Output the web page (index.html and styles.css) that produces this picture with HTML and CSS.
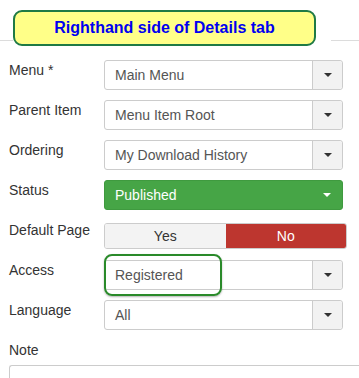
FILE: index.html
```html
<!DOCTYPE html>
<html lang="en">
<head>
    <meta charset="UTF-8">
    <meta name="viewport" content="width=device-width, initial-scale=1.0">
    <title>Details tab</title>
    <link rel="stylesheet" href="styles.css">
</head>
<body>
    <div class="tab-header">
        <div class="rule rule-left"></div>
        <div class="callout">Righthand side of Details tab</div>
        <div class="rule rule-right"></div>
    </div>

    <div class="details-form">
        <div class="form-row">
            <label class="form-label">Menu *</label>
            <div class="select-box">
                <span class="select-text">Main Menu</span>
                <span class="select-btn"><span class="caret"></span></span>
            </div>
        </div>

        <div class="form-row">
            <label class="form-label">Parent Item</label>
            <div class="select-box">
                <span class="select-text">Menu Item Root</span>
                <span class="select-btn"><span class="caret"></span></span>
            </div>
        </div>

        <div class="form-row">
            <label class="form-label">Ordering</label>
            <div class="select-box">
                <span class="select-text">My Download History</span>
                <span class="select-btn"><span class="caret"></span></span>
            </div>
        </div>

        <div class="form-row">
            <label class="form-label">Status</label>
            <div class="select-box select-published">
                <span class="select-text">Published</span>
                <span class="select-btn"><span class="caret"></span></span>
            </div>
        </div>

        <div class="form-row">
            <label class="form-label">Default Page</label>
            <div class="toggle">
                <span class="toggle-opt">Yes</span>
                <span class="toggle-opt toggle-active">No</span>
            </div>
        </div>

        <div class="form-row">
            <label class="form-label">Access</label>
            <div class="select-box">
                <span class="select-text">Registered</span>
                <span class="select-btn"><span class="caret"></span></span>
                <span class="highlight"></span>
            </div>
        </div>

        <div class="form-row">
            <label class="form-label">Language</label>
            <div class="select-box">
                <span class="select-text">All</span>
                <span class="select-btn"><span class="caret"></span></span>
            </div>
        </div>

        <div class="note-group">
            <label class="form-label">Note</label>
            <div class="note-input"></div>
        </div>
    </div>
</body>
</html>
```

FILE: styles.css
```css
* {
    margin: 0;
    padding: 0;
    box-sizing: border-box;
}

body {
    font-family: "Liberation Sans", Arial, sans-serif;
    font-size: 14px;
    color: #333;
    background: #fff;
    width: 359px;
    height: 378px;
    overflow: hidden;
}

.tab-header {
    display: flex;
    align-items: flex-start;
    padding-top: 10px;
}

.rule {
    height: 31px;
    border-bottom: 1px solid #dcdcdc;
}

.rule-left {
    width: 13px;
}

.rule-right {
    flex: 1;
    margin-left: 15px;
}

.callout {
    width: 303px;
    height: 36px;
    background: #ffff88;
    border: 2px solid #1f7a45;
    border-radius: 9px;
    color: #0000f0;
    font-weight: bold;
    font-size: 16px;
    line-height: 32px;
    text-align: center;
}

.details-form {
    padding-top: 14px;
}

.form-row {
    display: flex;
    height: 30px;
    margin-bottom: 10px;
}

.form-label {
    display: block;
    width: 104px;
    padding-left: 9px;
    line-height: 20px;
    color: #333;
}

.select-box {
    position: relative;
    display: flex;
    width: 239px;
    height: 30px;
    border: 1px solid #ccc;
    border-radius: 3px;
    background: #fff;
    color: #555;
}

.select-text {
    flex: 1;
    padding-left: 10px;
    line-height: 28px;
}

.select-btn {
    width: 30px;
    display: flex;
    align-items: center;
    justify-content: center;
    background: #f2f2f2;
    border-left: 1px solid #ccc;
    border-radius: 0 3px 3px 0;
}

.caret {
    width: 0;
    height: 0;
    border-left: 4px solid transparent;
    border-right: 4px solid transparent;
    border-top: 4px solid #333;
}

.select-published {
    background: #46a546;
    border-color: #3f9a3f;
    color: #fff;
}

.select-published .select-btn {
    background: transparent;
    border-left: none;
}

.select-published .caret {
    border-top-color: #fff;
}

.toggle {
    display: flex;
    width: 243px;
    height: 26px;
    margin-top: 3px;
    border: 1px solid #ccc;
    border-radius: 3px;
    overflow: hidden;
}

.toggle-opt {
    flex: 1;
    text-align: center;
    line-height: 24px;
    background: #f3f3f3;
    color: #333;
}

.toggle-active {
    background: #bd362f;
    color: #fff;
}

.highlight {
    position: absolute;
    left: -1px;
    top: -7px;
    width: 118px;
    height: 42px;
    border: 2px solid #2a8a2a;
    border-radius: 8px;
    box-shadow: 0 1px 2px rgba(0, 0, 0, 0.3);
}

.note-group .form-label {
    margin-bottom: 5px;
}

.note-input {
    margin-left: 9px;
    width: 350px;
    height: 13px;
    border: 1px solid #ccc;
    border-right: none;
    border-bottom: none;
    border-radius: 3px 0 0 0;
}
```
